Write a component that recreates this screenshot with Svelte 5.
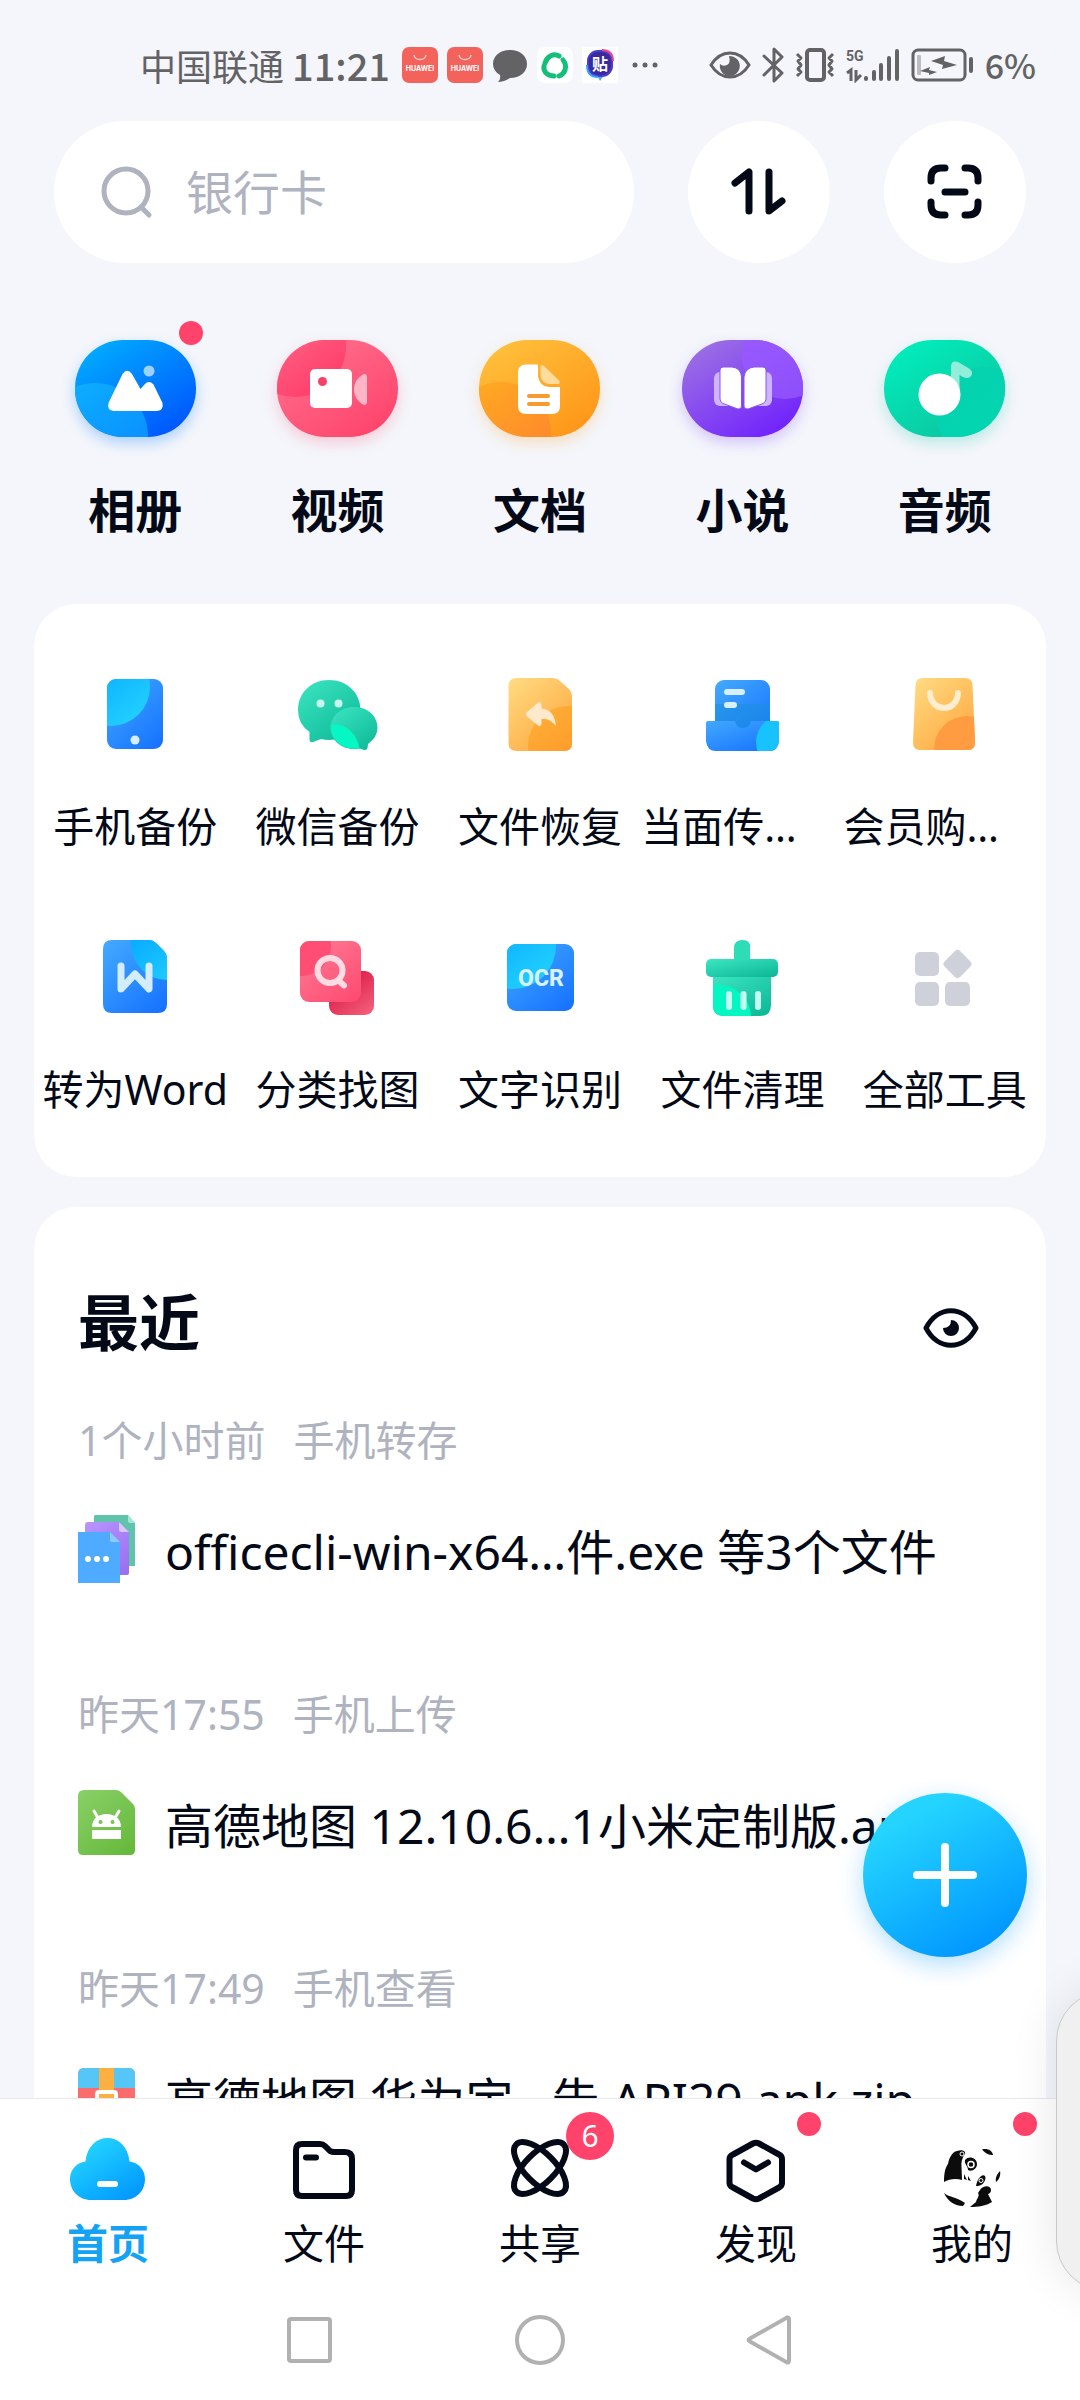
<script lang="ts">
	const categories = [
		{ id: 'album', label: '相册', dot: true },
		{ id: 'video', label: '视频', dot: false },
		{ id: 'doc', label: '文档', dot: false },
		{ id: 'novel', label: '小说', dot: false },
		{ id: 'audio', label: '音频', dot: false }
	];

	const tools = [
		{ id: 'phone', label: '手机备份' },
		{ id: 'wechat', label: '微信备份' },
		{ id: 'restore', label: '文件恢复' },
		{ id: 'transfer', label: '当面传…', cut: true },
		{ id: 'bag', label: '会员购…', cut: true },
		{ id: 'word', label: '转为Word' },
		{ id: 'find', label: '分类找图' },
		{ id: 'ocr', label: '文字识别' },
		{ id: 'clean', label: '文件清理' },
		{ id: 'all', label: '全部工具' }
	];

	const recents = [
		{ icon: 'files', time: '1个小时前', action: '手机转存', name: 'officecli-win-x64…件.exe 等3个文件' },
		{ icon: 'apk', time: '昨天17:55', action: '手机上传', name: '高德地图 12.10.6…1小米定制版.apk' },
		{ icon: 'zip', time: '昨天17:49', action: '手机查看', name: '高德地图 华为定…告 API29.apk.zip' }
	];

	const tabs = [
		{ id: 'home', label: '首页', badge: '', dot: false },
		{ id: 'folder', label: '文件', badge: '', dot: false },
		{ id: 'share', label: '共享', badge: '6', dot: false },
		{ id: 'discover', label: '发现', badge: '', dot: true },
		{ id: 'mine', label: '我的', badge: '', dot: true }
	];

	let active = 'home';

	// id, start colour, end colour (all run from top left to bottom right)
	const gradients = [
		['blueDeep', '#00b0ff', '#0050ff'],
		['blueSoft', '#0cb2ff', '#0a86ff'],
		['pink', '#ff7391', '#ff4169'],
		['pinkDeep', '#ff7a97', '#ff3765'],
		['orange', '#ffc23d', '#ff9316'],
		['orangeDeep', '#ffae22', '#ff7f2e'],
		['purple', '#9e74e2', '#6d1cff'],
		['purpleSoft', '#9a5cff', '#8c4dfa'],
		['green', '#00f0be', '#0fbf9b'],
		['greenSoft', '#06d0ac', '#00d9b5'],
		['tBlue', '#42a8ff', '#1672ff'],
		['tCyan', '#00a0ff', '#24d4ff'],
		['tGreen', '#3ae4c0', '#0db898'],
		['tYellow', '#ffd980', '#ffa53b'],
		['tOrange', '#ffb03a', '#ff8c1e'],
		['tPink', '#ff7c96', '#ff4a70'],
		['tRed', '#d40b38', '#f45f7c'],
		['cloud', '#27dcff', '#0094ff'],
		['apk', '#88cf66', '#66b93c'],
		['lilac', '#b894ff', '#9a6ff0']
	];
</script>

{#snippet categoryIcon(id)}
	<svg class="category-svg" viewBox="0 0 121 97" aria-hidden="true">
		<g clip-path="url(#pill)">
			{#if id === 'album'}
				<rect width="121" height="97" fill="url(#blueDeep)" />
				<circle cx="20" cy="96" r="53" fill="url(#blueSoft)" />
				<circle cx="74" cy="31" r="5.5" fill="#9bd2ff" />
				<path d="M47.500 34Q52 27.500 57 34L65.500 49L70 44Q74 40 78.500 44.500L87.500 63Q89 70.500 82 71H39Q31.500 70.500 33.500 63Z" fill="#fff" />
			{:else if id === 'video'}
				<rect width="121" height="97" fill="url(#pink)" />
				<circle cx="18" cy="6" r="51" fill="url(#pinkDeep)" />
				<rect x="33" y="29" width="42" height="39" rx="5" fill="#fff" />
				<circle cx="45.500" cy="41.500" r="4.500" fill="#f5426a" />
				<path d="M77 49.500C77 42 81 38 85 35Q90 32 90 38V61Q90 67 85 64C81 61 77 57 77 49.500Z" fill="#ffb5c5" />
			{:else if id === 'doc'}
				<rect width="121" height="97" fill="url(#orange)" />
				<circle cx="22" cy="92" r="50" fill="url(#orangeDeep)" />
				<path d="M47 24.500H59V36Q60 46 70 47H81V66Q81 74 73 74H47Q39 74 39 66V32.500Q39 24.500 47 24.500Z" fill="#fff" />
				<path d="M61.500 27Q62 24 65 26L80 40.500Q82 44 78 44H71Q62 43.500 61.500 35Z" fill="#ffdb9c" />
				<path d="M50 56H69M50 64H69" stroke="#f79a30" stroke-width="4" stroke-linecap="round" />
			{:else if id === 'novel'}
				<rect width="121" height="97" fill="url(#purple)" />
				<circle cx="103" cy="16" r="43" fill="url(#purpleSoft)" />
				<rect x="32" y="32" width="20" height="34" rx="6" fill="#ceb3ff" />
				<rect x="70" y="32" width="20" height="34" rx="6" fill="#ceb3ff" />
				<path d="M41 27H50Q59 28 59.500 37V66Q59.500 69.500 56 69L41 63.500Q38 62 38 59V30Q38 27 41 27Z" fill="#fff" stroke="#8a55ef" />
				<path d="M81 27H72Q63 28 62 37V66Q62 69.500 66 69L81 63.500Q84 62 84 59V30Q84 27 81 27Z" fill="#fff" stroke="#8a55ef" />
			{:else}
				<rect width="121" height="97" fill="url(#green)" />
				<circle cx="101" cy="75" r="48" fill="url(#greenSoft)" />
				<path d="M67 27Q67 20 74 22L85 28.500Q90 32 87 36Q84.500 39.500 79 37L75.500 35V54H67Z" fill="#93eddb" />
				<circle cx="55.500" cy="54.500" r="21" fill="#fff" />
			{/if}
		</g>
	</svg>
{/snippet}

{#snippet toolIcon(id)}
	<svg class="tool-svg" viewBox="0 0 80 80" fill="none" aria-hidden="true">
		{#if id === 'phone'}
			<clipPath id="c-phone"><rect x="12" y="5" width="56" height="70" rx="9" /></clipPath>
			<g clip-path="url(#c-phone)">
				<rect x="12" y="5" width="56" height="70" fill="url(#tBlue)" />
				<circle cx="16" cy="13" r="39" fill="url(#tCyan)" />
			</g>
			<circle cx="40" cy="66" r="4.500" fill="#d6efff" />
		{:else if id === 'wechat'}
			<path d="M31 6C49 6 62.500 19 62.500 36S49 66 31 66Q27 66 23 65L15 68Q11 69 11.500 64V58Q0 50 0 36C0 19 13 6 31 6Z" fill="url(#tGreen)" />
			<circle cx="22.500" cy="29.500" r="4" fill="#c8f8ea" />
			<circle cx="40.500" cy="29.500" r="4" fill="#c8f8ea" />
			<path d="M56 33C70 33 79.500 42 79.500 54Q79.500 63 70 70L69.500 74Q69 76.500 66 76L62 74.500Q59 75 56 75C43 75 32.500 66 32.500 54S43 33 56 33Z" fill="url(#tGreen)" />
			<path d="M33 51C46 48 59 59 61.500 74.500C46 77 32 66 33 51Z" fill="#05f8c4" />
		{:else if id === 'restore'}
			<clipPath id="c-restore"><path d="M17 4H53Q57 4 60 7L69 15Q72 18 72 22V69Q72 77 64 77H17Q8.500 77 8.500 69V12Q8.500 4 17 4Z" /></clipPath>
			<g clip-path="url(#c-restore)">
				<rect x="8" y="4" width="64" height="73" fill="url(#tYellow)" />
				<circle cx="68" cy="72" r="40" fill="url(#tOrange)" />
			</g>
			<path d="M26.500 38.500L38 28.500Q41 27 41.500 31V34.500C50 35 55 41 56 52C51 46 47 44.500 41.500 45V49.500Q41 53.500 38 51.500L26.500 42Q25 40 26.500 38.500Z" fill="#ffe9cc" />
		{:else if id === 'transfer'}
			<rect x="13" y="6" width="55" height="58" rx="9" fill="url(#tBlue)" />
			<path d="M13 30H68V54H13Z" fill="#1c8fe0" opacity="0.6" />
			<path d="M25 18H40M25 31H32" stroke="#d8efff" stroke-width="6" stroke-linecap="round" />
			<clipPath id="c-tray"><path d="M6 47H33Q34 54 41 54T49 47H75Q77 47 77 49V67Q76 77 67 77H14Q5 77 4 67V49Q4 47 6 47Z" /></clipPath>
			<g clip-path="url(#c-tray)">
				<rect x="4" y="45" width="73" height="32" fill="url(#tBlue)" />
				<circle cx="81" cy="68" r="27" fill="#17c2ff" />
			</g>
		{:else if id === 'bag'}
			<clipPath id="c-bag"><path d="M18 4H60Q67 4 67.500 11L70 68Q70 76 63 76H15Q8 76 8 68L10.500 11Q11 4 18 4Z" /></clipPath>
			<g clip-path="url(#c-bag)">
				<rect x="8" y="4" width="63" height="73" fill="url(#tYellow)" />
				<circle cx="62" cy="75" r="33" fill="#ff9c42" />
			</g>
			<path d="M25 19C26 39 52 39 53 19" stroke="#ffedcd" stroke-width="6" stroke-linecap="round" />
		{:else if id === 'word'}
			<clipPath id="c-word"><path d="M17 3H54Q58 3 61 6L69 14Q72 17 72 21V67Q72 76 63 76H17Q8 76 8 67V12Q8 3 17 3Z" /></clipPath>
			<g clip-path="url(#c-word)">
				<rect x="8" y="3" width="64" height="73" fill="url(#tBlue)" />
				<circle cx="72" cy="7" r="36" fill="url(#tCyan)" />
			</g>
			<polyline points="26,29 26,52 40,37 54,52 54,29" stroke="#d3edff" stroke-width="7" stroke-linecap="round" stroke-linejoin="round" />
		{:else if id === 'find'}
			<rect x="31" y="34" width="45" height="44" rx="9" fill="url(#tRed)" />
			<clipPath id="c-find"><rect x="2" y="4" width="61" height="61" rx="9" /></clipPath>
			<g clip-path="url(#c-find)">
				<rect x="2" y="4" width="61" height="61" fill="url(#tPink)" />
				<circle cx="3" cy="9" r="30" fill="#ff4d73" />
			</g>
			<circle cx="32" cy="33.500" r="12.500" stroke="#ffdbe3" stroke-width="6" />
			<path d="M40 43L46 48.500" stroke="#ffdbe3" stroke-width="6" stroke-linecap="round" />
		{:else if id === 'ocr'}
			<clipPath id="c-ocr"><rect x="7" y="7" width="67" height="67" rx="9" /></clipPath>
			<g clip-path="url(#c-ocr)">
				<rect x="7" y="7" width="67" height="67" fill="url(#tBlue)" />
				<circle cx="13" cy="9" r="43" fill="url(#tCyan)" />
			</g>
			<text class="ocr-text" x="41" y="49" text-anchor="middle">OCR</text>
		{:else if id === 'clean'}
			<path d="M32 24V11Q32 3 40.500 3T48 11V24Z" fill="#2edcb8" />
			<clipPath id="c-clean"><path d="M11 38H69V68Q69 79 58 79H22Q11 79 11 68Z" /></clipPath>
			<g clip-path="url(#c-clean)">
				<rect x="11" y="38" width="58" height="41" fill="url(#tGreen)" />
				<circle cx="17" cy="80" r="32" fill="#04f6c3" />
			</g>
			<rect x="4" y="22" width="72" height="18" rx="5" fill="url(#tGreen)" />
			<path d="M27 57V70M41.500 57V70M56 57V70" stroke="#c3fff0" stroke-width="6" stroke-linecap="round" />
		{:else}
			<g fill="#ced1d9">
				<rect x="10" y="15" width="24" height="24" rx="5" />
				<rect x="10" y="45" width="24" height="24" rx="5" />
				<rect x="40" y="45" width="25" height="24" rx="5" />
				<rect x="41.500" y="16" width="22" height="22" rx="4" transform="rotate(45 52.500 27)" />
			</g>
		{/if}
	</svg>
{/snippet}

{#snippet fileIcon(id)}
	<svg class="file-svg" viewBox="0 0 57 68" aria-hidden="true">
		{#if id === 'files'}
			<path d="M17 0H50L57 8V51H16V1Z" fill="#5fc4ab" />
			<path d="M50 0L57 8H52Q50 8 50 6Z" fill="#a5e6d6" />
			<path d="M10 7H41L51 17V58Q51 60 49 60H7V10Q7 7 10 7Z" fill="url(#lilac)" />
			<path d="M41 7L51 17H43Q41 17 41 15Z" fill="#d8c6ff" />
			<path d="M0 17H32L42 27V68H0Z" fill="#4eabff" />
			<path d="M32 17L42 27H34Q32 27 32 25Z" fill="#8ccaff" />
			<circle cx="10" cy="44" r="3" fill="#fff" />
			<circle cx="19" cy="44" r="3" fill="#fff" />
			<circle cx="28" cy="44" r="3" fill="#fff" />
		{:else if id === 'apk'}
			<path d="M6 1H38Q41 1 43 3L55 15Q57 17 57 20V61Q57 66 52 66H5Q0 66 0 61V7Q0 1 6 1Z" fill="url(#apk)" />
			<path d="M14 38C14 30 20 25 28.500 25S43 30 43 38Z" fill="#fff" />
			<path d="M16 22L20 29M41 22L37 29" stroke="#fff" stroke-width="3" stroke-linecap="round" />
			<circle cx="22.500" cy="33" r="2" fill="#76c350" />
			<circle cx="34.500" cy="33" r="2" fill="#76c350" />
			<rect x="14" y="41" width="29" height="9" fill="#fff" />
		{:else}
			<rect y="5" width="57" height="58" rx="6" fill="#fb6c6c" />
			<path d="M0 25V11Q0 5 6 5H51Q57 5 57 11V25Z" fill="#56c6f7" />
			<rect x="21" y="5" width="15" height="58" fill="#fcb041" />
			<rect x="19" y="29" width="19" height="18" rx="2" fill="none" stroke="#fff" stroke-width="4" />
		{/if}
	</svg>
{/snippet}

{#snippet tabIcon(id)}
	<svg class="tab-svg" viewBox="0 0 76 66" fill="none" aria-hidden="true">
		{#if id === 'home'}
			<path d="M37.500 2C48 2 58 10 59.500 25.500C69 27 75 34 75 43C75 55 66 64 54 64H21C9 64 0 55 0 43C0 34 6 27 15.500 25.500C17 10 27 2 37.500 2Z" fill="url(#cloud)" />
			<path d="M30 48H45" stroke="#fff" stroke-width="6" stroke-linecap="round" />
		{:else}
			<g stroke="#030917" stroke-width="6" stroke-linecap="round" stroke-linejoin="round">
				{#if id === 'folder'}
					<path d="M16 8H34Q37 8 39 10L44 15Q46 16 48 16H59Q66 16 66 23V54Q66 60 60 60H16Q10 60 10 54V14Q10 8 16 8Z" />
					<path d="M20 21.500H30" />
				{:else if id === 'share'}
					<ellipse cx="38" cy="32" rx="33.500" ry="15" transform="rotate(45 38 32)" />
					<ellipse cx="38" cy="32" rx="33.500" ry="15" transform="rotate(-45 38 32)" />
				{:else if id === 'discover'}
					<path d="M35 7.500Q38 6 41 7.500L61 18.500Q64 20 64 23V47Q64 50 61 51.500L41 62.500Q38 64 35 62.500L15 51.500Q11.500 50 11.500 47V23Q11.500 20 15 18.500Z" />
					<path d="M26 26.500L38 33.500L50 26.500" />
				{/if}
			</g>
			{#if id === 'mine'}
				<g fill="#0c0c0c">
					<path d="M10 46C10 38 11 32 14 28C15 22 18 16 23 15C28 13 32 15 31 18C28 22 27 26 27.500 31L28 44C22 42 15 43 10 46Z" />
					<path d="M10 57C14 61 23 61 31 67L29 70C20 70 13 64 10 57Z" />
					<path d="M31 24C35 19 43 22 43 28C43 33 38 36 34 34C34 30 30 28 31 24Z" />
					<path d="M42 50C43 43 48 37 51 40C53 44 48 51 42 50Z" />
					<path d="M30 38L33 44L30 43ZM34 40L37 45L34 44Z" />
					<path d="M48 13.500C53 12 58 14 59 19C55 19 52 18 48 13.500Z" />
					<path d="M66 35C67 39 65 44 62 46C61 42 63 38 66 35Z" />
					<path d="M46 54C49 49 57 49 57 54Q57 57 54 58L58 66C52 70 44 71 36 71L42 66C43 62 46 60 44 57Z" />
				</g>
				<circle cx="37" cy="28.500" r="3" stroke="#fff" stroke-width="1.500" />
				<circle cx="47" cy="44.500" r="2" stroke="#fff" />
				<circle cx="28" cy="18" r="2" stroke="#fff" />
			{/if}
		{/if}
	</svg>
{/snippet}

<svg class="defs" aria-hidden="true">
	<defs>
		{#each gradients as [id, from, to]}
			<linearGradient {id} x1="0.1" y1="0" x2="0.9" y2="1">
				<stop offset="0" stop-color={from} />
				<stop offset="1" stop-color={to} />
			</linearGradient>
		{/each}
		<clipPath id="pill"><rect width="121" height="97" rx="48" /></clipPath>
	</defs>
</svg>

<div class="screen">
	<div class="content">
		<div class="status">
			<span class="carrier">中国联通</span>
			<span class="time">11:21</span>
			<div class="notices">
				{#each [1, 2] as n (n)}
					<svg width="36" height="36" viewBox="0 0 36 36">
						<rect width="36" height="36" rx="7" fill="#f4625c" />
						<path d="M12 8C13 14 23 14 24 8" fill="none" stroke="#ffd0cc" stroke-width="1.500" />
						<text class="huawei" x="18" y="24" text-anchor="middle">HUAWEI</text>
					</svg>
				{/each}
				<svg width="36" height="36" viewBox="0 0 36 36">
					<path d="M18 3C28 3 35 9 35 17S28 31 18 31Q12 35 6 35Q9 32 8 28Q1 24 1 17C1 9 8 3 18 3Z" fill="#636366" />
				</svg>
				<svg width="36" height="36" viewBox="0 0 36 36">
					<rect width="36" height="36" rx="8" fill="#fff" />
					<g fill="none" stroke="#13c07a" stroke-width="5" stroke-linecap="round">
						<path d="M8 16C10 9 17 6 22 9" />
						<path d="M26 13C31 19 28 27 22 29" />
						<path d="M17 29C10 29 6 24 7 19" />
					</g>
				</svg>
				<svg width="36" height="36" viewBox="0 0 36 36">
					<rect width="36" height="36" fill="#fff" />
					<path d="M15 28H22L18 34Z" fill="#3bb0ff" />
					<rect x="5" y="3" width="26" height="27" rx="11" fill="#4a3ad0" />
					<path d="M20 3C28 3 31 7 31 14" fill="none" stroke="#f0468a" stroke-width="2" />
					<path d="M5 18C5 26 9 30 16 30" fill="none" stroke="#35a0ff" stroke-width="2" />
					<rect x="7" y="5" width="22" height="23" rx="9" fill="#3b2a9c" />
					<text class="tie" x="18" y="23" text-anchor="middle">贴</text>
				</svg>
				<svg width="36" height="36" viewBox="0 0 36 36" fill="#636366">
					<circle cx="8" cy="18" r="2.500" /><circle cx="18" cy="18" r="2.500" /><circle cx="28" cy="18" r="2.500" />
				</svg>
			</div>
			<div class="signals">
				<svg width="42" height="36" viewBox="0 0 42 36">
					<path d="M2 18C12 2 30 2 40 18C30 34 12 34 2 18Z" fill="none" stroke="#636366" stroke-width="3" />
					<path d="M20 9A10 10 0 1 1 11 17Q14 20 18 18T20 9Z" fill="#636366" />
				</svg>
				<svg width="22" height="36" viewBox="0 0 22 36" fill="none" stroke="#636366" stroke-width="3" stroke-linecap="round" stroke-linejoin="round">
					<path d="M2 9L20 26L12 34V2L20 10L2 28" />
				</svg>
				<svg width="40" height="36" viewBox="0 0 40 36" fill="none" stroke="#636366" stroke-width="3" stroke-linejoin="round">
					<rect x="12" y="3" width="17" height="30" rx="3" stroke-width="4" />
					<path d="M2 7L6 11L3 14L6 18L3 22L6 25L2 29M38 7L34 11L37 14L34 18L37 22L34 25L38 29" />
				</svg>
				<svg width="54" height="36" viewBox="0 0 54 36">
					<text class="net" x="0" y="14">5G</text>
					<path d="M1 26L5 23V34M10 23V33L15 28" fill="none" stroke="#636366" stroke-width="3" />
					<path d="M20 31V32M28 25V32M35 18V32M43 11V32M51 4V32" stroke="#636366" stroke-width="4" stroke-linecap="round" />
				</svg>
				<svg width="63" height="36" viewBox="0 0 63 36">
					<rect x="2" y="3" width="52" height="30" rx="5" fill="none" stroke="#636366" stroke-width="3" />
					<rect x="6" y="8" width="4" height="20" rx="1" fill="#bdbec2" />
					<path d="M20 14L34 9L33 14L46 18L31 22L32 18ZM9 24L19 20L18 23L26 25L18 28L18 26Z" fill="#636366" />
					<path d="M60 12V24" stroke="#636366" stroke-width="4" stroke-linecap="round" />
				</svg>
				<span class="percent">6%</span>
			</div>
		</div>

		<div class="topbar">
			<label class="search">
				<svg width="54" height="54" viewBox="0 0 54 54" fill="none" stroke="#afb3bf" stroke-width="5" stroke-linecap="round">
					<circle cx="26" cy="26" r="22" />
					<path d="M42 43L49 50" />
				</svg>
				<input type="search" placeholder="银行卡" aria-label="搜索" />
			</label>
			<button class="round" aria-label="传输列表">
				<svg width="56" height="56" viewBox="0 0 56 56" fill="none" stroke="#030917" stroke-width="7" stroke-linecap="round" stroke-linejoin="round">
					<path d="M4 19L18 8V47M38 8V47L51 37" />
				</svg>
			</button>
			<button class="round" aria-label="扫一扫">
				<svg width="56" height="56" viewBox="0 0 56 56" fill="none" stroke="#030917" stroke-width="7" stroke-linecap="round">
					<path d="M4 17V14Q4 4 14 4H18M38 4H41Q51 4 51 14V17M51 38V41Q51 51 41 51H38M18 51H14Q4 51 4 41V38M18 28H38" />
				</svg>
			</button>
		</div>

		<div class="categories">
			{#each categories as item}
				<button class="category">
					<span class="category-icon {item.id}">
						{@render categoryIcon(item.id)}
						{#if item.dot}<i class="dot"></i>{/if}
					</span>
					<span class="category-label">{item.label}</span>
				</button>
			{/each}
		</div>

		<section class="card tools">
			{#each tools as tool}
				<button class="tool" class:cut={tool.cut}>
					{@render toolIcon(tool.id)}
					<span class="tool-label">{tool.label}</span>
				</button>
			{/each}
		</section>

		<section class="card recent">
			<header>
				<h2>最近</h2>
				<button class="eye" aria-label="隐藏">
					<svg width="56" height="44" viewBox="0 0 56 44">
						<path d="M3 22C15 -1 41 -1 53 22C41 45 15 45 3 22Z" fill="none" stroke="#030917" stroke-width="5" stroke-linejoin="round" />
						<path d="M28 14A8 8 0 1 1 20 22Q28 22 28 14Z" fill="#030917" />
					</svg>
				</button>
			</header>
			<ul>
				{#each recents as item}
					<li>
						<p class="meta"><span>{item.time}</span><span>{item.action}</span></p>
						<a class="file" href="#file">
							{@render fileIcon(item.icon)}
							<span class="file-name">{item.name}</span>
						</a>
					</li>
				{/each}
			</ul>
		</section>
	</div>

	<div class="bottom">
		<nav class="tabs">
			{#each tabs as tab}
				<a href="#{tab.id}" class="tab" class:active={active === tab.id} on:click={() => (active = tab.id)}>
					<span class="tab-icon">
						{@render tabIcon(tab.id)}
						{#if tab.badge}<b class="badge">{tab.badge}</b>{/if}
						{#if tab.dot}<i class="dot"></i>{/if}
					</span>
					<span class="tab-label">{tab.label}</span>
				</a>
			{/each}
		</nav>
		<div class="system">
			<button aria-label="最近任务">
				<svg width="50" height="50" viewBox="0 0 50 50"><rect x="4" y="4" width="41" height="42" rx="2" /></svg>
			</button>
			<button aria-label="主屏幕">
				<svg width="50" height="50" viewBox="0 0 50 50"><circle cx="25" cy="25" r="23" /></svg>
			</button>
			<button aria-label="返回">
				<svg width="50" height="50" viewBox="0 0 50 50"><path d="M42 2.500Q44 2 44 4.500V45.500Q44 48 42 47.500L5 26.500Q2 25 5 23.500Z" /></svg>
			</button>
		</div>
	</div>

	<button class="fab" aria-label="新建">
		<svg width="64" height="64" viewBox="0 0 64 64" stroke="#fff" stroke-width="8" stroke-linecap="round">
			<path d="M4 32H60M32 4V60" />
		</svg>
	</button>
	<div class="side-panel"></div>
</div>

<style>
	:global(body) {
		margin: 0;
		background: #f4f6fb;
	}

	.screen {
		position: relative;
		display: flex;
		flex-direction: column;
		height: 100vh;
		overflow: hidden;
		background: #f4f6fb;
		color: #030917;
		font-family: 'Noto Sans', 'Noto Sans CJK SC', sans-serif;
	}

	.defs {
		position: absolute;
		width: 0;
		height: 0;
	}

	svg {
		display: block;
		flex: none;
	}

	button {
		margin: 0;
		padding: 0;
		border: 0;
		background: none;
		color: inherit;
		font: inherit;
	}

	a {
		color: inherit;
		text-decoration: none;
	}

	.content {
		flex: 1;
		min-height: 0;
		overflow-y: auto;
		scrollbar-width: none;
	}

	/* status bar */
	.status {
		display: flex;
		align-items: center;
		height: 42px;
		padding: 44px 44px 35px 140px;
		color: #636366;
		font-family: 'Noto Sans CJK SC', sans-serif;
		line-height: 42px;
		white-space: nowrap;
	}

	.carrier {
		font-size: 36px;
	}

	.time {
		margin-left: 8px;
		font-size: 38px;
		font-weight: 500;
	}

	.notices {
		display: flex;
		gap: 9px;
		margin-left: 12px;
	}

	.signals {
		display: flex;
		align-items: center;
		gap: 11px;
		margin-left: auto;
	}

	.percent {
		font-size: 34px;
		font-weight: 500;
	}

	.huawei {
		fill: #fff;
		font: 700 7px Inter, sans-serif;
	}

	.tie {
		fill: #fff;
		font: 700 16px 'Noto Sans CJK SC', sans-serif;
	}

	.net {
		fill: #636366;
		font: 700 14px Roboto, sans-serif;
	}

	/* search row */
	.topbar {
		display: flex;
		gap: 54px;
		padding: 0 54px;
	}

	.search {
		display: flex;
		flex: 1;
		align-items: center;
		gap: 32px;
		min-width: 0;
		height: 142px;
		padding: 0 46px;
		box-sizing: border-box;
		border-radius: 71px;
		background: #fff;
	}

	.search input {
		flex: 1;
		min-width: 0;
		padding: 0;
		border: 0;
		outline: 0;
		background: none;
		color: inherit;
		font-family: inherit;
		font-size: 47px;
	}

	.search input::placeholder {
		color: #afb3bf;
		opacity: 1;
	}

	.round {
		display: grid;
		place-items: center;
		width: 142px;
		height: 142px;
		border-radius: 50%;
		background: #fff;
	}

	/* category row */
	.categories {
		display: grid;
		grid-template-columns: repeat(5, 1fr);
		padding: 77px 34px 64px;
	}

	.category {
		display: flex;
		flex-direction: column;
		align-items: center;
		gap: 43px;
	}

	.category-icon {
		position: relative;
		border-radius: 48px;
	}

	.category-svg {
		width: 121px;
		height: 97px;
	}

	.album {
		box-shadow: 0 6px 14px rgba(0, 122, 255, 0.3);
	}

	.video {
		box-shadow: 0 6px 14px rgba(255, 75, 112, 0.25);
	}

	.doc {
		box-shadow: 0 6px 14px rgba(255, 155, 30, 0.25);
	}

	.novel {
		box-shadow: 0 6px 14px rgba(120, 50, 255, 0.25);
	}

	.audio {
		box-shadow: 0 6px 14px rgba(10, 200, 165, 0.25);
	}

	.category-label {
		font-size: 47px;
		font-weight: 700;
		line-height: 60px;
	}

	.dot {
		position: absolute;
		top: -19px;
		left: 104px;
		width: 24px;
		height: 24px;
		border-radius: 50%;
		background: #ff436a;
	}

	/* cards */
	.card {
		margin: 0 34px;
		border-radius: 42px;
		background: #fff;
	}

	.tools {
		display: grid;
		grid-template-columns: repeat(5, 1fr);
		row-gap: 83px;
		padding: 70px 0 60px;
	}

	.tool {
		display: flex;
		flex-direction: column;
		align-items: center;
		gap: 44px;
		min-width: 0;
	}

	.tool-svg {
		width: 80px;
		height: 80px;
	}

	.tool-label {
		font-size: 41px;
		line-height: 56px;
		white-space: nowrap;
	}

	.cut .tool-label {
		align-self: flex-start;
	}

	.ocr-text {
		fill: #d8f1ff;
		font: 800 23px Roboto, sans-serif;
	}

	.recent {
		margin-top: 30px;
		padding: 74px 67px 60px 44px;
	}

	.recent header {
		display: flex;
		align-items: center;
		justify-content: space-between;
	}

	.recent h2 {
		margin: 0;
		font-size: 61px;
		font-weight: 700;
		line-height: 84px;
	}

	.eye {
		padding-top: 10px;
	}

	.recent ul {
		display: flex;
		flex-direction: column;
		gap: 103px;
		margin: 0;
		padding: 47px 0 0;
		list-style: none;
	}

	.meta {
		display: flex;
		gap: 28px;
		margin: 0 0 47px;
		color: #afb3bf;
		font-size: 41px;
		line-height: 56px;
	}

	.file {
		display: flex;
		align-items: flex-start;
		gap: 30px;
		height: 68px;
	}

	.file-svg {
		width: 57px;
		height: 68px;
	}

	.file-name {
		overflow: hidden;
		font-size: 48px;
		line-height: 74px;
		text-overflow: ellipsis;
		white-space: nowrap;
	}

	/* bottom navigation */
	.bottom {
		border-top: 1px solid #e6e8ec;
		background: #fff;
	}

	.tabs {
		display: grid;
		grid-template-columns: repeat(5, 1fr);
		padding-top: 37px;
	}

	.tab {
		display: flex;
		flex-direction: column;
		align-items: center;
		gap: 13px;
	}

	.tab-icon {
		position: relative;
	}

	.tab-svg {
		width: 76px;
		height: 66px;
		overflow: visible;
	}

	.tab-label {
		font-size: 41px;
		line-height: 56px;
	}

	.active .tab-label {
		color: #14a2f5;
		font-weight: 700;
	}

	.tab-icon .dot {
		top: -24px;
		left: 79px;
	}

	.badge {
		position: absolute;
		top: -24px;
		left: 64px;
		width: 48px;
		height: 48px;
		border-radius: 50%;
		background: #ff436a;
		color: #fff;
		font-size: 30px;
		font-weight: 400;
		line-height: 48px;
		text-align: center;
	}

	.system {
		display: flex;
		justify-content: center;
		gap: 180px;
		padding: 44px 0 35px;
	}

	.system svg {
		fill: none;
		stroke: #b1b1b1;
		stroke-width: 4;
	}

	/* floating parts */
	.fab {
		position: absolute;
		right: 53px;
		bottom: 443px;
		display: grid;
		place-items: center;
		width: 164px;
		height: 164px;
		border-radius: 50%;
		background: linear-gradient(150deg, #24d4ff 20%, #0096ff 88%);
		box-shadow: 0 8px 24px rgba(0, 150, 255, 0.3);
	}

	.side-panel {
		position: absolute;
		right: -76px;
		bottom: 109px;
		width: 98px;
		height: 298px;
		border: 1px solid #c8c9cb;
		border-radius: 50px;
		background: #f0f0f0;
		box-shadow: 0 0 48px rgba(0, 0, 0, 0.1);
	}
</style>
